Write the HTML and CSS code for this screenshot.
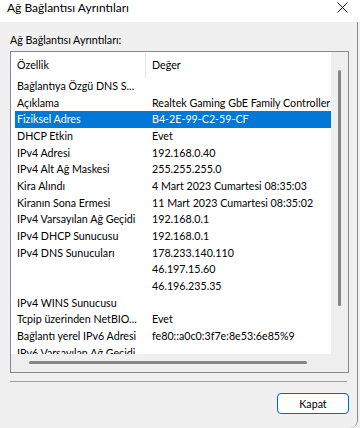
FILE: index.html
```html
<!DOCTYPE html>
<html lang="tr">
<head>
  <meta charset="UTF-8" />
  <meta name="viewport" content="width=device-width, initial-scale=1.0"/>
  <title>Ağ Bağlantısı Ayrıntıları</title>
  <link rel="stylesheet" href="styles.css">
</head>
<body>
  <div class="titlebar">
    <span class="title">Ağ Bağlantısı Ayrıntıları</span>
    <svg class="close" width="11" height="11" viewBox="0 0 11 11">
      <path d="M0.5 0.5 L10.5 10.5 M10.5 0.5 L0.5 10.5" stroke="#1a1a1a" stroke-width="1" fill="none"/>
    </svg>
  </div>

  <div class="dialog">
    <div class="group-label">Ağ Bağlantısı Ayrıntıları:</div>

    <div class="listview">
      <div class="lv-content">
        <div class="lv-header">
          <div class="hd-cell hd-prop">Özellik</div>
          <div class="hd-cell">Değer</div>
        </div>
        <div class="row"><div class="prop">Bağlantıya Özgü DNS S...</div><div class="val"></div></div>
        <div class="row"><div class="prop">Açıklama</div><div class="val">Realtek Gaming GbE Family Controller</div></div>
        <div class="row selected"><div class="prop">Fiziksel Adres</div><div class="val">B4-2E-99-C2-59-CF</div></div>
        <div class="row"><div class="prop">DHCP Etkin</div><div class="val">Evet</div></div>
        <div class="row"><div class="prop">IPv4 Adresi</div><div class="val">192.168.0.40</div></div>
        <div class="row"><div class="prop">IPv4 Alt Ağ Maskesi</div><div class="val">255.255.255.0</div></div>
        <div class="row"><div class="prop">Kira Alındı</div><div class="val">4 Mart 2023 Cumartesi 08:35:03</div></div>
        <div class="row"><div class="prop">Kiranın Sona Ermesi</div><div class="val">11 Mart 2023 Cumartesi 08:35:02</div></div>
        <div class="row"><div class="prop">IPv4 Varsayılan Ağ Geçidi</div><div class="val">192.168.0.1</div></div>
        <div class="row"><div class="prop">IPv4 DHCP Sunucusu</div><div class="val">192.168.0.1</div></div>
        <div class="row"><div class="prop">IPv4 DNS Sunucuları</div><div class="val">178.233.140.110</div></div>
        <div class="row"><div class="prop"></div><div class="val">46.197.15.60</div></div>
        <div class="row"><div class="prop"></div><div class="val">46.196.235.35</div></div>
        <div class="row"><div class="prop">IPv4 WINS Sunucusu</div><div class="val"></div></div>
        <div class="row"><div class="prop">Tcpip üzerinden NetBIO...</div><div class="val">Evet</div></div>
        <div class="row"><div class="prop">Bağlantı yerel IPv6 Adresi</div><div class="val">fe80::a0c0:3f7e:8e53:6e85%9</div></div>
        <div class="row"><div class="prop">IPv6 Varsayılan Ağ Geçidi</div><div class="val"></div></div>
      </div>
      <div class="vscroll"><div class="vthumb"></div></div>
      <div class="hscroll"><div class="hthumb"></div></div>
      <div class="corner"></div>
    </div>

    <div class="separator"></div>

    <div class="actions">
      <button class="btn">Kapat</button>
    </div>
  </div>
</body>
</html>
```
FILE: styles.css
```css
html, body {
  margin: 0;
  padding: 0;
  background: #f0f0f0;
  color: #000;
  font-family: "Segoe UI", Lato, "Liberation Sans", sans-serif;
  font-size: 10.7px;
}
.titlebar {
  height: 22px;
  background: #fff;
  display: flex;
  align-items: flex-start;
  justify-content: space-between;
  padding: 0 12px 0 7px;
}
.title {
  font-size: 12px;
  line-height: 15px;
}
.close {
  margin-top: 2px;
}
.dialog {
  width: 358px;
  height: 406px;
  box-sizing: border-box;
  padding: 11px 8px 0 10px;
  border-right: 1px solid #8c8c8c;
  border-bottom-right-radius: 8px;
  display: flex;
  flex-direction: column;
}
.group-label {
  line-height: 13px;
  margin-bottom: 5px;
}
.listview {
  border: 1px solid #828790;
  display: grid;
  grid-template-columns: 320px 17px;
  grid-template-rows: 302px 18px;
  background: #fff;
}
.lv-content {
  overflow: hidden;
  background: #fff;
}
.lv-header {
  display: flex;
  height: 26px;
  line-height: 26px;
}
.hd-cell {
  padding-left: 6px;
  white-space: nowrap;
}
.hd-prop {
  width: 135px;
  box-sizing: border-box;
  border-right: 1px solid #e5e5e5;
  margin: 1px 0 0;
  line-height: 24px;
}
.row {
  display: flex;
  width: 420px;
  height: 16.67px;
  line-height: 16.67px;
  margin-left: 4px;
  white-space: nowrap;
}
.row.selected {
  background: #0078d7;
  color: #fff;
}
.prop {
  width: 130px;
  flex: none;
  box-sizing: border-box;
  padding-left: 2px;
  overflow: hidden;
}
.val {
  padding-left: 7px;
}
.vscroll {
  background: #efefef;
  padding: 18px 0 0 7px;
}
.vthumb {
  width: 3px;
  height: 236px;
  background: #858585;
  border-radius: 2px;
}
.hscroll {
  background: #efefef;
  padding: 7px 0 0 18px;
}
.hthumb {
  width: 278px;
  height: 3px;
  background: #858585;
  border-radius: 2px;
}
.corner {
  background: #efefef;
}
.separator {
  height: 1px;
  background: #a0a0a0;
  margin: 8px 2px 0 0;
}
.actions {
  display: flex;
  justify-content: flex-end;
  margin-top: 11px;
}
.btn {
  width: 72px;
  height: 21px;
  padding: 0;
  background: #fdfdfd;
  border: 1px solid #0067c0;
  border-radius: 4px;
  font-family: inherit;
  font-size: 10.7px;
  line-height: 18px;
  color: #000;
}
```
